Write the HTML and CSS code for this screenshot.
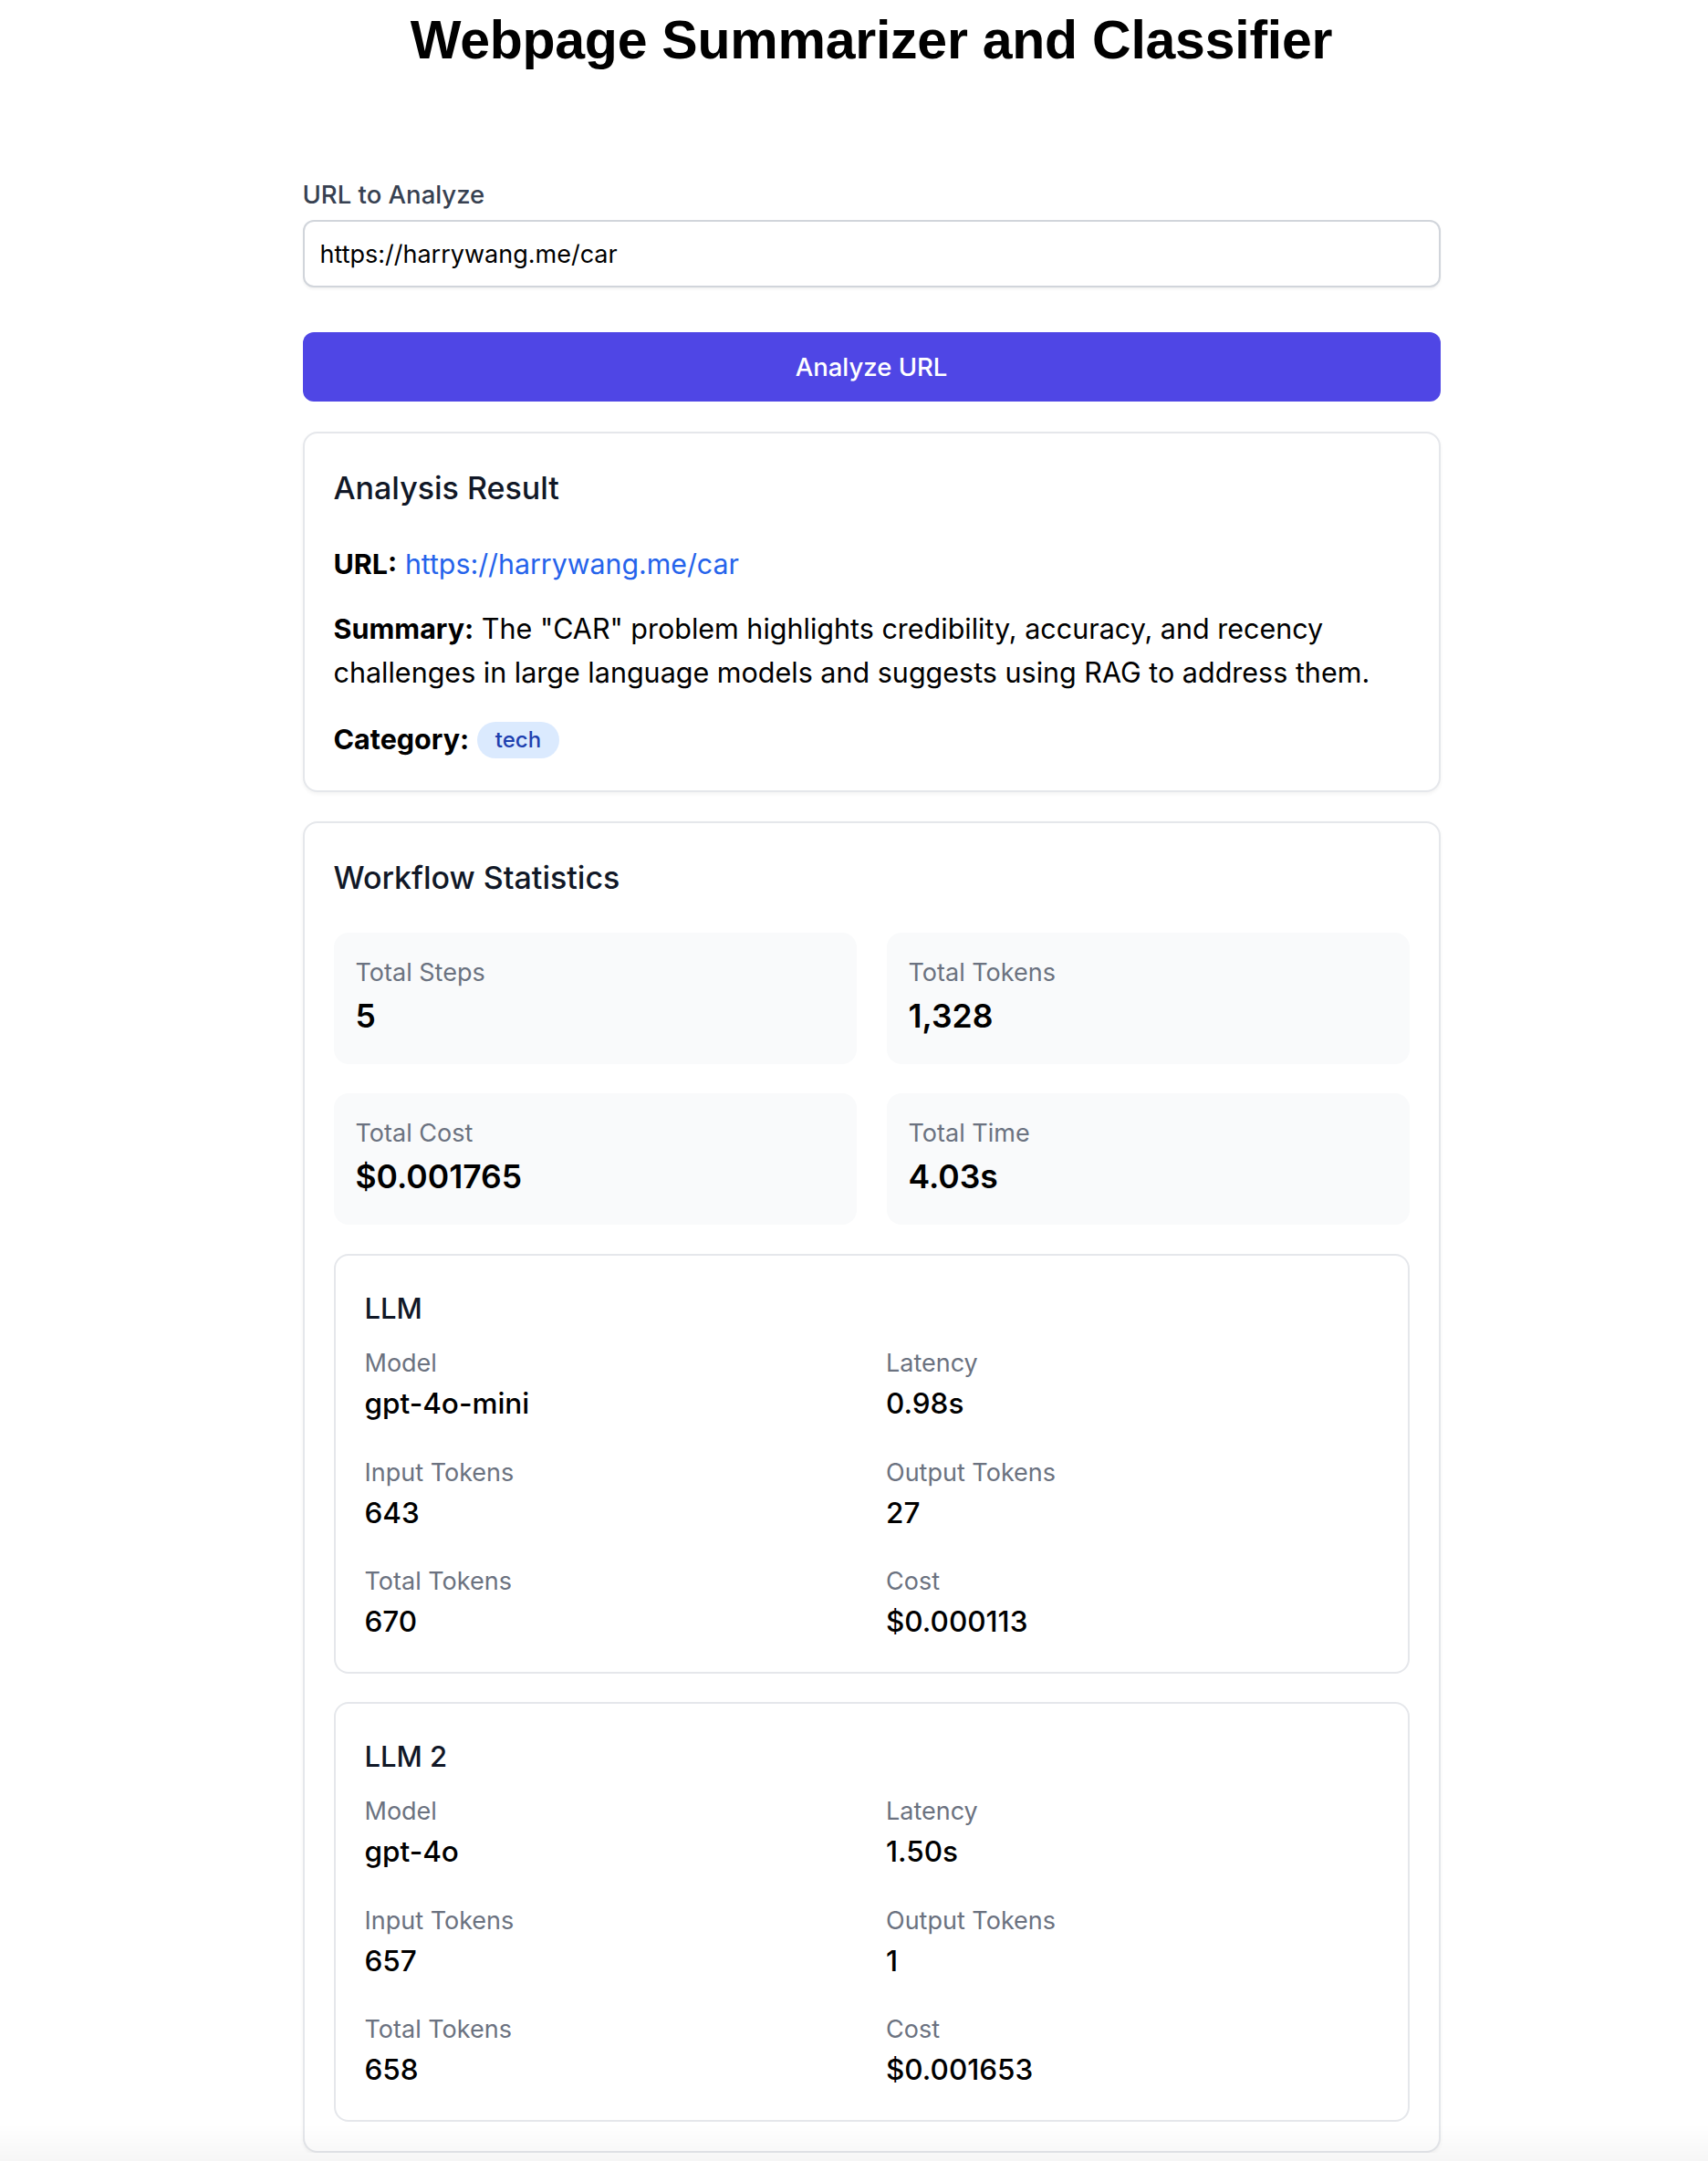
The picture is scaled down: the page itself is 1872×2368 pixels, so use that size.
FILE: index.html
```html
<!DOCTYPE html>
<html lang="en">
<head>
<meta charset="utf-8">
<title>Webpage Summarizer and Classifier</title>
<link rel="stylesheet" href="styles.css">
</head>
<body>
<div class="page">
  <main class="container">
    <h1 class="title">Webpage Summarizer and Classifier</h1>

    <form class="form">
      <label class="field-label" for="url">URL to Analyze</label>
      <input class="field-input" id="url" type="text" value="https://harrywang.me/car">
      <button class="btn" type="button">Analyze URL</button>
    </form>

    <section class="card result">
      <h2 class="card-title">Analysis Result</h2>
      <p class="row row-url"><strong>URL:</strong> <a class="link" href="#">https://harrywang.me/car</a></p>
      <p class="row row-summary"><strong>Summary:</strong> The "CAR" problem highlights credibility, accuracy, and recency challenges in large language models and suggests using RAG to address them.</p>
      <p class="row row-category"><strong>Category:</strong> <span class="badge">tech</span></p>
    </section>

    <section class="card stats">
      <h2 class="card-title stats-title">Workflow Statistics</h2>
      <div class="stat-grid">
        <div class="stat-box"><div class="stat-label">Total Steps</div><div class="stat-value">5</div></div>
        <div class="stat-box"><div class="stat-label">Total Tokens</div><div class="stat-value">1,328</div></div>
        <div class="stat-box"><div class="stat-label">Total Cost</div><div class="stat-value">$0.001765</div></div>
        <div class="stat-box"><div class="stat-label">Total Time</div><div class="stat-value">4.03s</div></div>
      </div>

      <div class="step-list">
        <div class="step">
          <h3 class="step-title">LLM</h3>
          <div class="step-grid">
            <div><div class="step-label">Model</div><div class="step-value">gpt-4o-mini</div></div>
            <div><div class="step-label">Latency</div><div class="step-value">0.98s</div></div>
            <div><div class="step-label">Input Tokens</div><div class="step-value">643</div></div>
            <div><div class="step-label">Output Tokens</div><div class="step-value">27</div></div>
            <div><div class="step-label">Total Tokens</div><div class="step-value">670</div></div>
            <div><div class="step-label">Cost</div><div class="step-value">$0.000113</div></div>
          </div>
        </div>

        <div class="step">
          <h3 class="step-title">LLM 2</h3>
          <div class="step-grid">
            <div><div class="step-label">Model</div><div class="step-value">gpt-4o</div></div>
            <div><div class="step-label">Latency</div><div class="step-value">1.50s</div></div>
            <div><div class="step-label">Input Tokens</div><div class="step-value">657</div></div>
            <div><div class="step-label">Output Tokens</div><div class="step-value">1</div></div>
            <div><div class="step-label">Total Tokens</div><div class="step-value">658</div></div>
            <div><div class="step-label">Cost</div><div class="step-value">$0.001653</div></div>
          </div>
        </div>
      </div>
    </section>
  </main>
</div>
<div class="bottom-fade"></div>
</body>
</html>
```

FILE: styles.css
```css
* { box-sizing: border-box; }

html, body {
  margin: 0;
  padding: 0;
  background: #ffffff;
}

body {
  font-family: Inter, "Noto Sans", "Liberation Sans", sans-serif;
  color: #000000;
}

.page {
  display: flex;
  justify-content: center;
  padding-left: 38px;
}

.container {
  width: 1247px;
  display: flex;
  flex-direction: column;
}

.title {
  font-family: "Liberation Sans", Arial, sans-serif;
  font-weight: 700;
  font-size: 59px;
  line-height: 72px;
  letter-spacing: -0.25px;
  text-align: center;
  margin: 8px 0 0;
  color: #000000;
}

.form {
  display: flex;
  flex-direction: column;
  margin-top: 113px;
}

.field-label {
  font-size: 27.5px;
  line-height: 40px;
  font-weight: 500;
  color: #374151;
  margin-bottom: 8px;
}

.field-input {
  height: 74px;
  border: 2px solid #d1d5db;
  border-radius: 12px;
  padding: 0 17px;
  font-family: inherit;
  font-size: 27px;
  color: #000000;
  background: #ffffff;
  box-shadow: 0 2px 3px rgba(0, 0, 0, 0.05);
  outline: none;
}

.btn {
  margin-top: 49px;
  height: 76px;
  border: none;
  border-radius: 12px;
  background: #4f46e5;
  color: #ffffff;
  font-family: inherit;
  font-size: 27.5px;
  font-weight: 500;
  cursor: pointer;
}

.card {
  background: #ffffff;
  border: 2px solid #e5e7eb;
  border-radius: 16px;
  padding: 32px;
  box-shadow: 0 2px 4px rgba(0, 0, 0, 0.05);
}

.result { margin-top: 33px; }
.stats { margin-top: 32px; }

.card-title {
  margin: 0 0 31px;
  font-size: 34px;
  line-height: 56px;
  font-weight: 500;
  color: #111827;
}

.stats-title { margin-bottom: 32px; }

.row {
  margin: 0;
  font-size: 30.5px;
  line-height: 48px;
}

.row strong { font-weight: 700; }

.row-url { margin-bottom: 23px; }
.row-summary { margin-bottom: 25px; }

.link {
  color: #2563eb;
  text-decoration: none;
  font-size: 30.3px;
}

.badge {
  display: inline-block;
  vertical-align: middle;
  position: relative;
  top: -2px;
  background: #dbeafe;
  color: #1e40af;
  font-size: 24px;
  line-height: 32px;
  font-weight: 500;
  padding: 4px 20px;
  border-radius: 999px;
}

.stat-grid {
  display: grid;
  grid-template-columns: 1fr 1fr;
  gap: 32px 33px;
  margin-bottom: 32px;
}

.stat-box {
  background: #f9fafb;
  border-radius: 16px;
  padding: 24px 24px;
}

.stat-label {
  font-size: 27px;
  line-height: 40px;
  color: #6b7280;
}

.stat-value {
  font-size: 35.5px;
  line-height: 56px;
  font-weight: 600;
  color: #000000;
}

.step-list {
  display: flex;
  flex-direction: column;
  gap: 31px;
}

.step {
  border: 2px solid #e5e7eb;
  border-radius: 16px;
  padding: 34px 32px 31px;
}

.step-title {
  margin: 0 0 16px;
  font-size: 31px;
  line-height: 48px;
  font-weight: 500;
  color: #111827;
}

.step-grid {
  display: grid;
  grid-template-columns: 1fr 1fr;
  gap: 31.5px 32px;
}

.step-label {
  font-size: 27px;
  line-height: 40px;
  color: #6b7280;
}

.step-value {
  font-size: 31.5px;
  line-height: 48px;
  font-weight: 500;
  color: #000000;
}

.bottom-fade {
  position: fixed;
  left: 0;
  right: 0;
  bottom: 0;
  height: 40px;
  background: linear-gradient(to bottom, rgba(0, 0, 0, 0), rgba(0, 0, 0, 0.035));
  pointer-events: none;
}
```
